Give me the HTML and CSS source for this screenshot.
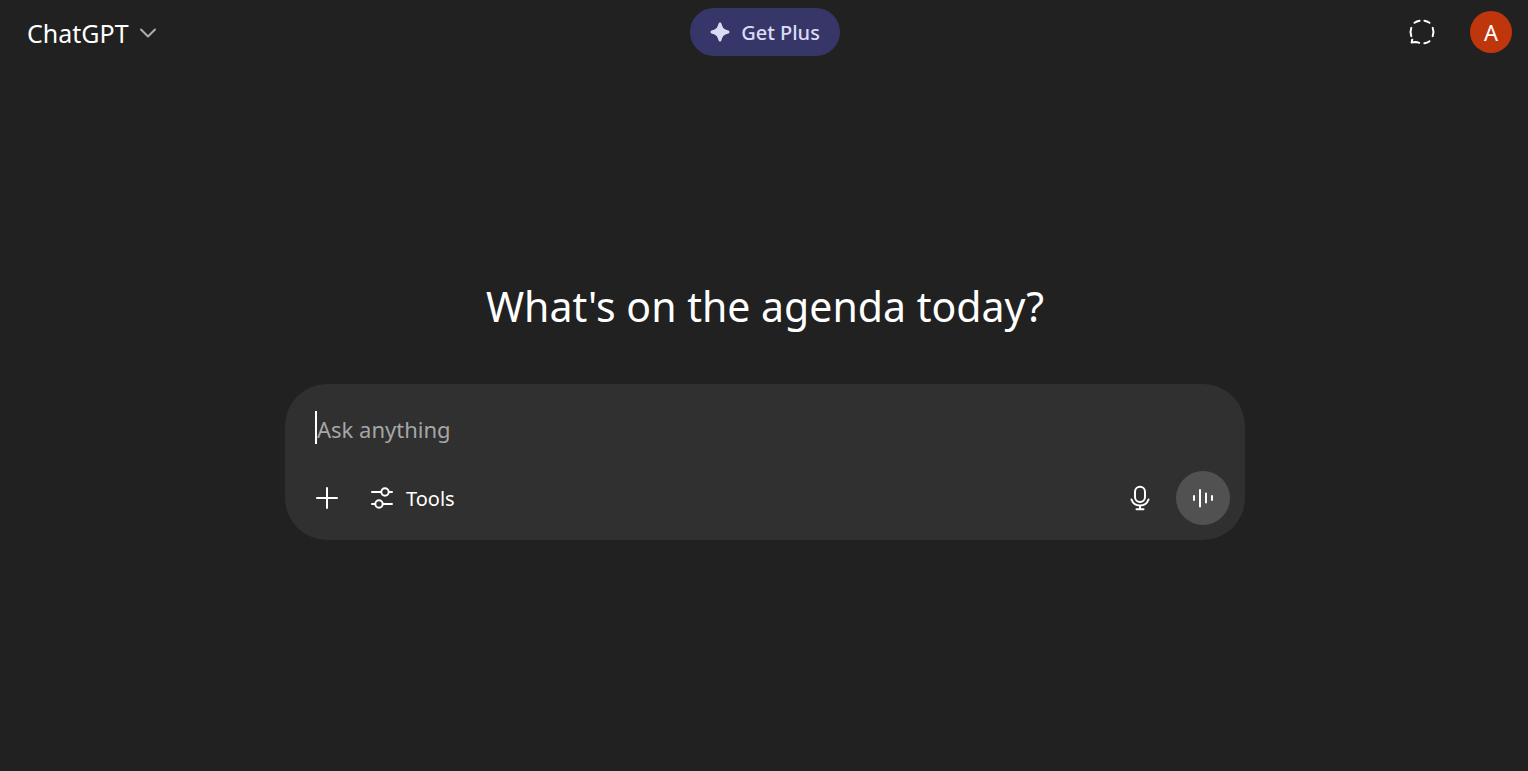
FILE: index.html
```html
<!DOCTYPE html>
<html lang="en">
<head>
<meta charset="utf-8">
<meta name="viewport" content="width=device-width, initial-scale=1">
<title>ChatGPT</title>
<link rel="stylesheet" href="styles.css">
</head>
<body>
<header class="topbar">
  <button class="model" type="button">ChatGPT
    <svg class="chevron" viewBox="0 0 18 12" width="18" height="12" aria-hidden="true"><path d="M2 2.500l7 7 7-7"/></svg>
  </button>
  <button class="plus" type="button">
    <svg class="sparkle" viewBox="0 0 20 20" width="20" height="20" aria-hidden="true"><path d="M10 .5c.7 0 1.200.4 1.400 1.100 1.300 4.600 2.400 5.700 7 7 .7.200 1.100.7 1.100 1.400s-.4 1.200-1.100 1.400c-4.600 1.300-5.700 2.400-7 7-.2.700-.7 1.100-1.400 1.100s-1.200-.4-1.400-1.100c-1.300-4.600-2.400-5.700-7-7C.9 11.200.5 10.700.5 10s.4-1.200 1.100-1.400c4.600-1.300 5.700-2.400 7-7C8.800.9 9.300.5 10 .5z"/></svg>
    Get Plus
  </button>
  <div class="account">
    <button class="icon-button" type="button" aria-label="Temporary chat">
      <svg class="line" viewBox="0 0 28 28" width="28" height="28" aria-hidden="true"><path d="M6.500 4.800A11.500 11.500 0 0 1 11.600 2.700M16.400 2.700A11.500 11.500 0 0 1 21.500 4.800M24.700 9.900A11.500 11.500 0 0 1 24.700 18.100M21.500 23.200A11.500 11.500 0 0 1 16.400 25.300M3.300 18.100A11.500 11.500 0 0 1 3.300 9.900M4.300 21.600L3.600 24.600L7.500 24Q9.500 24 11.200 24.800"/></svg>
    </button>
    <button class="avatar" type="button" aria-label="Account menu">A</button>
  </div>
</header>
<main class="main">
  <h1 class="title">What's on the agenda today?</h1>
  <form class="composer">
    <div class="field">
      <input class="prompt" type="text" placeholder="Ask anything" aria-label="Ask anything">
      <span class="caret"></span>
    </div>
    <div class="actions">
      <button class="icon-button" type="button" aria-label="Add files">
        <svg class="line" viewBox="0 0 28 28" width="28" height="28" aria-hidden="true"><path d="M14 4v20M4 14h20"/></svg>
      </button>
      <button class="tools" type="button">
        <svg class="line" viewBox="0 0 28 28" width="28" height="28" aria-hidden="true"><path d="M4 8h9M21 8h3M4 20h3M15 20h9"/><circle cx="17" cy="8" r="3.700"/><circle cx="11" cy="20" r="3.700"/></svg>
        Tools
      </button>
      <button class="icon-button mic" type="button" aria-label="Dictate">
        <svg class="line" viewBox="0 0 28 28" width="28" height="28" aria-hidden="true"><rect x="9" y="2.700" width="10" height="15.300" rx="5"/><path d="M5.500 15.500a9 9 0 0 0 17 0M14 21.500v3.800M10.500 25.300h7"/></svg>
      </button>
      <button class="voice" type="button" aria-label="Voice mode">
        <svg class="line" viewBox="0 0 28 28" width="28" height="28" aria-hidden="true"><path d="M5 12v4M11 6v16.500M17 9.500v9M23 12v4"/></svg>
      </button>
    </div>
  </form>
</main>
</body>
</html>
```
FILE: styles.css
```css
* {
  box-sizing: border-box;
}

body {
  margin: 0;
  min-height: 100vh;
  display: flex;
  flex-direction: column;
  background: #212121;
  color: #fff;
  font-family: "Segoe UI", "Noto Sans", sans-serif;
}

button,
input {
  margin: 0;
  padding: 0;
  border: 0;
  background: none;
  color: inherit;
  font: inherit;
}

svg {
  display: block;
  flex: none;
}

.line {
  fill: none;
  stroke: #fff;
  stroke-width: 2;
  stroke-linecap: round;
  stroke-linejoin: round;
}

.topbar {
  display: grid;
  grid-template-columns: 1fr auto 1fr;
  align-items: center;
  height: 64px;
  padding: 0 16px 0 18px;
}

.model {
  justify-self: start;
  display: flex;
  align-items: center;
  gap: 10px;
  padding: 2px 9px 0;
  font-size: 25px;
  line-height: 36px;
}

.chevron {
  fill: none;
  stroke: #afafaf;
  stroke-width: 2;
  stroke-linecap: round;
  stroke-linejoin: round;
}

.plus {
  display: flex;
  align-items: center;
  gap: 11px;
  height: 48px;
  padding: 0 20px;
  border-radius: 24px;
  background: #373669;
  color: #dcdbf6;
  font-size: 20px;
  font-weight: 500;
}

.sparkle {
  fill: #dcdbf6;
}

.account {
  justify-self: end;
  display: flex;
  align-items: center;
  gap: 34px;
}

.avatar {
  width: 42px;
  height: 42px;
  border-radius: 50%;
  background: #c0360c;
  font-size: 22px;
  line-height: 42px;
}

.main {
  display: flex;
  flex-direction: column;
  align-items: center;
  padding: 212px 24px 0 26px;
}

.title {
  margin: 0 0 48px;
  font-size: 41px;
  font-weight: 400;
  line-height: 60px;
}

.composer {
  display: flex;
  flex-direction: column;
  gap: 26px;
  width: 100%;
  max-width: 960px;
  padding: 27px 15px 15px 30px;
  border-radius: 42px;
  background: #303030;
}

.field {
  position: relative;
}

.prompt {
  display: block;
  width: 100%;
  height: 34px;
  padding: 2px 0 0 2px;
  outline: 0;
  font-size: 22px;
}

.prompt::placeholder {
  color: #a6a6a6;
}

.caret {
  position: absolute;
  top: 0;
  left: 0;
  width: 2px;
  height: 33px;
  background: #fff;
}

.actions {
  display: flex;
  align-items: center;
}

.actions > .icon-button:first-child {
  margin-left: -2px;
}

.tools {
  display: flex;
  align-items: center;
  gap: 10px;
  margin-left: 27px;
  font-size: 20px;
}

.mic {
  margin: 0 22px 0 auto;
}

.voice {
  display: grid;
  place-items: center;
  width: 54px;
  height: 54px;
  border-radius: 50%;
  background: #515151;
}
```
